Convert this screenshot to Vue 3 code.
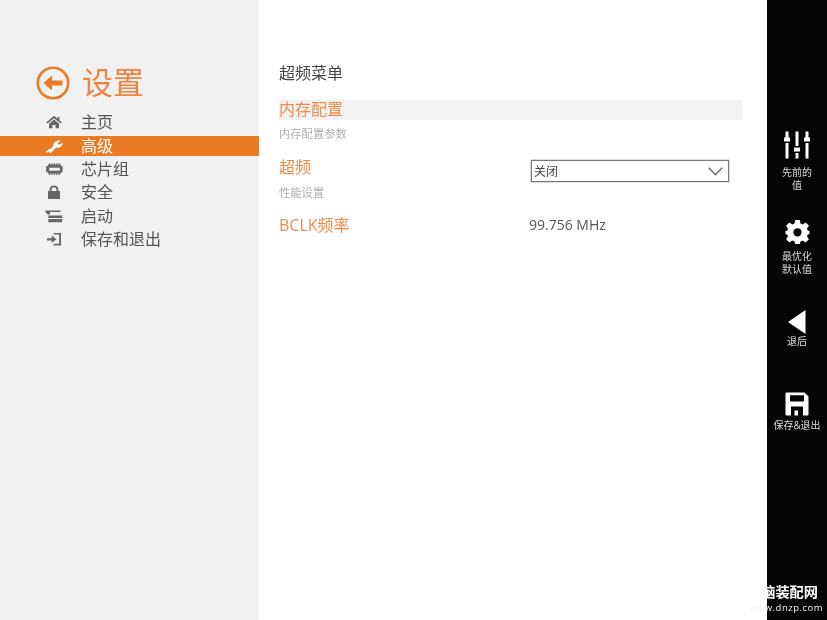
<script setup>
const navItems = [
  { label: '主页', icon: 'home' },
  { label: '高级', icon: 'wrench', active: true },
  { label: '芯片组', icon: 'chip' },
  { label: '安全', icon: 'lock' },
  { label: '启动', icon: 'boot' },
  { label: '保存和退出', icon: 'exit' },
]
</script>

<template>
  <div class="page">
    <aside class="sidebar">
      <header class="brand">
        <svg class="back" viewBox="0 0 34 34" width="34" height="34">
          <circle cx="17" cy="17" r="15.2" fill="none" stroke="#ea7a24" stroke-width="2.6" />
          <path d="M7.5 17 L16 9.5 V14.4 H26.5 V19.6 H16 V24.5 Z" fill="#ea7a24" />
        </svg>
        <h1 class="brand-title">设置</h1>
      </header>
      <nav class="nav">
        <div v-for="item in navItems" :key="item.label" class="nav-row" :class="{ active: item.active }">
          <svg class="nav-icon" viewBox="0 0 18 16" width="18" height="16">
            <path v-if="item.icon === 'home'" d="M9 1.8 L12.6 4.8 V3 H14.4 V6.4 L16.8 8.4 L15.6 9.6 L9 4.2 L2.4 9.6 L1.2 8.4 Z M4 9.8 L9 5.6 L14 9.8 V14.2 H10.6 V11 H7.4 V14.2 H4 Z" />
            <path v-else-if="item.icon === 'wrench'" d="M0.8 13.6 L8.2 8.6 C7.8 5 10.8 2.2 15.6 2.6 L12.8 4.9 L13.4 6.3 L15.4 6.5 L17.6 4.4 C18 7.8 14.8 10.2 11.4 9.6 L6 14.8 C5 15.6 3.8 14.4 4.6 13.6 L5.4 12.8 L3 14.2 C1.8 14.8 0.4 14.2 0.8 13.6 Z" />
            <path v-else-if="item.icon === 'chip'" d="M3 3.6 H4 V2.2 H5.2 V3.6 H6.4 V2.2 H7.6 V3.6 H8.8 V2.2 H10 V3.6 H11.2 V2.2 H12.4 V3.6 H13.6 V2.2 H14.8 V3.6 H16 V5 H17.6 V11.2 H16 V12.6 H14.8 V14 H13.6 V12.6 H12.4 V14 H11.2 V12.6 H10 V14 H8.8 V12.6 H7.6 V14 H6.4 V12.6 H5.2 V14 H4 V12.6 H3 V11.2 H1.2 V5 H3 Z M4.2 6.8 V9.8 H14.8 V6.8 Z" fill-rule="evenodd" />
            <path v-else-if="item.icon === 'lock'" d="M3 7 H4.6 V5.4 C4.6 0.2 13.4 0.2 13.4 5.4 V7 H15 V15 H3 Z M6.6 7 H11.4 V5.4 C11.4 2.6 6.6 2.6 6.6 5.4 Z" fill-rule="evenodd" />
            <path v-else-if="item.icon === 'boot'" d="M0.5 2.6 H15.5 V4 H5 V6.4 H2.8 L0.5 4.2 Z M3.4 7.4 H17.2 V10 H3.4 Z M3.4 11 H17.2 V14.2 H3.4 Z" />
            <path v-else d="M8.5 2 H16 V14.4 H8.5 V12.8 H14.2 V3.6 H8.5 Z M2 7.2 H6.6 V4.6 L11.6 8.2 L6.6 11.8 V9.4 H2 Z" />
          </svg>
          <span class="nav-label">{{ item.label }}</span>
        </div>
      </nav>
    </aside>

    <main class="content">
      <div class="content-title">超频菜单</div>
      <div class="section-bar">内存配置</div>
      <div class="hint hint-first">内存配置参数</div>
      <div class="row row-oc">
        <div class="row-label">超频</div>
        <div class="select">
          <span>关闭</span>
          <svg viewBox="0 0 15 9" width="15" height="9">
            <path d="M0.8 0.8 L7.5 7.8 L14.2 0.8" fill="none" stroke="#666" stroke-width="1.4" />
          </svg>
        </div>
      </div>
      <div class="hint hint-second">性能设置</div>
      <div class="row row-bclk">
        <div class="row-label">BCLK频率</div>
        <div class="value">99.756 MHz</div>
      </div>
    </main>

    <aside class="rail">
      <div class="rail-item">
        <svg viewBox="0 0 26 28" width="26" height="28" class="rail-icon">
          <path d="M1.5 0.5 H4.5 V6.5 H6 V10.5 H0 V6.5 H1.5 Z M1.5 12 H4.5 V27.5 H1.5 Z M11.5 0.5 H14.5 V15 H11.5 Z M10 16.5 H16 V20.5 H10 Z M11.5 22 H14.5 V27.5 H11.5 Z M21.5 0.5 H24.5 V6.5 H26 V10.5 H20 V6.5 H21.5 Z M21.5 12 H24.5 V27.5 H21.5 Z" fill="#fff" />
        </svg>
        <div class="rail-label">先前的<br />值</div>
      </div>
      <div class="rail-item item-gear">
        <svg viewBox="0 0 26 26" width="25" height="26" class="rail-icon">
          <path d="M10.6 0.5 H15.4 L16.1 4.1 L18.4 5.1 L21.5 3 L24.9 6.4 L22.8 9.5 L23.8 11.8 L25.5 12 V15 L23.8 15.7 L22.8 17.5 L24.9 20.6 L21.5 24 L18.4 21.9 L16.1 22.9 L15.4 25.5 H10.6 L9.9 22.9 L7.6 21.9 L4.5 24 L1.1 20.6 L3.2 17.5 L2.2 15.7 L0.5 15 V12 L2.2 11.8 L3.2 9.5 L1.1 6.4 L4.5 3 L7.6 5.1 L9.9 4.1 Z M13 9 A4.3 4.3 0 1 0 13 17.6 A4.3 4.3 0 1 0 13 9 Z" fill="#fff" fill-rule="evenodd" />
        </svg>
        <div class="rail-label">最优化<br />默认值</div>
      </div>
      <div class="rail-item item-back">
        <svg viewBox="0 0 18 24" width="18" height="24" class="rail-icon">
          <path d="M0 12 L17.5 0 V24 Z" fill="#fff" />
        </svg>
        <div class="rail-label">退后</div>
      </div>
      <div class="rail-item item-save">
        <svg viewBox="0 0 24 24" width="24" height="24" class="rail-icon">
          <path d="M0.5 1.5 Q0.5 0.5 1.5 0.5 H19.5 L23.5 4.5 V22.5 Q23.5 23.5 22.5 23.5 H1.5 Q0.5 23.5 0.5 22.5 Z M5 3.2 V9.4 H19 V3.2 Z M6 14.5 V23.5 H18 V14.5 Z" fill="#fff" fill-rule="evenodd" />
          <rect x="9.5" y="18.5" width="3.5" height="5" fill="#fff" />
        </svg>
        <div class="rail-label">保存&amp;退出</div>
      </div>
    </aside>

    <div class="watermark">
      <div class="wm-cn">电脑装配网</div>
      <div class="wm-url">www.dnzp.com</div>
    </div>
  </div>
</template>

<style>
html, body { margin: 0; padding: 0; }
</style>

<style scoped>
.page {
  position: relative;
  display: flex;
  width: 827px;
  height: 620px;
  overflow: hidden;
  background: #fff;
  font-family: "Open Sans", "Noto Sans CJK SC", sans-serif;
  color: #555;
  filter: blur(0.35px);
}
.sidebar {
  width: 259px;
  flex: none;
  background: #f1f1f1;
  padding-top: 65px;
  box-sizing: border-box;
}
.brand {
  display: flex;
  align-items: center;
  padding-left: 36px;
  height: 36px;
}
.back { flex: none; }
.brand-title {
  margin: -2px 0 0 12px;
  font-size: 31px;
  line-height: 36px;
  font-weight: 400;
  color: #f0843f;
}
.nav { margin-top: 9px; }
.nav-row {
  display: flex;
  align-items: center;
  height: 23.5px;
  color: #555;
}
.nav-row.active {
  background: #ea7a24;
  color: #fff;
  height: 20px;
  margin: 2.25px 0 1.25px;
}
.nav-icon {
  flex: none;
  margin-left: 45px;
  fill: #666;
}
.active .nav-icon { fill: #fff; }
.nav-label {
  margin-left: 18px;
  font-size: 16px;
  line-height: 20px;
}
.content {
  width: 508px;
  flex: none;
  box-sizing: border-box;
  padding: 63px 24px 0 20px;
}
.content-title {
  font-size: 16px;
  line-height: 20px;
  color: #444;
}
.section-bar {
  margin-top: 17px;
  height: 20px;
  line-height: 19px;
  background: #f2f2f2;
  font-size: 16px;
  color: #f5894a;
}
.hint {
  font-size: 11.3px;
  line-height: 16px;
  color: #b0b0b0;
}
.hint-first { margin-top: 6px; }
.hint-second { margin-top: 0; }
.row {
  display: flex;
}
.row-oc { margin-top: 9px; height: 34px; }
.row-bclk { margin-top: 11px; height: 24px; align-items: center; }
.row-label {
  width: 250px;
  flex: none;
  font-size: 16px;
  color: #f5894a;
}
.row-oc .row-label {
  margin-top: 5px;
  line-height: 22px;
}
.select {
  display: flex;
  align-items: center;
  justify-content: space-between;
  width: 198px;
  height: 22px;
  margin: 9px 0 0 2px;
  box-sizing: border-box;
  border: 1px solid #777;
  box-shadow: 0 0 0 0.5px #bbb;
  padding: 0 5px 0 2px;
  font-size: 12px;
  color: #444;
}
.value {
  font-size: 14px;
  color: #555;
}
.rail {
  width: 60px;
  flex: none;
  background: #050507;
  padding-top: 131px;
  box-sizing: border-box;
}
.rail-item {
  display: flex;
  flex-direction: column;
  align-items: center;
  height: 85px;
}
.rail-icon { flex: none; }
.rail-label {
  margin-top: 7px;
  font-size: 10px;
  line-height: 12.5px;
  color: #ddd;
  text-align: center;
  white-space: nowrap;
}
.item-gear .rail-icon { margin-top: 3px; }
.item-gear .rail-label { margin-top: 5px; }
.item-back .rail-icon { margin-top: 9px; }
.item-back .rail-label { margin-top: 1px; }
.item-save .rail-icon { margin-top: 6px; }
.item-save .rail-label {
  margin-top: 3px;
  letter-spacing: -0.1px;
}
.watermark {
  position: absolute;
  left: 747px;
  top: 584px;
  width: 71px;
  color: #fff;
}
.wm-cn {
  font-size: 14.2px;
  line-height: 15px;
  font-weight: 700;
  white-space: nowrap;
}
.wm-url {
  margin: 3px 0 0 2px;
  font-size: 9.5px;
  line-height: 12px;
  letter-spacing: 0.5px;
  color: #f4f4f4;
  white-space: nowrap;
}
</style>
